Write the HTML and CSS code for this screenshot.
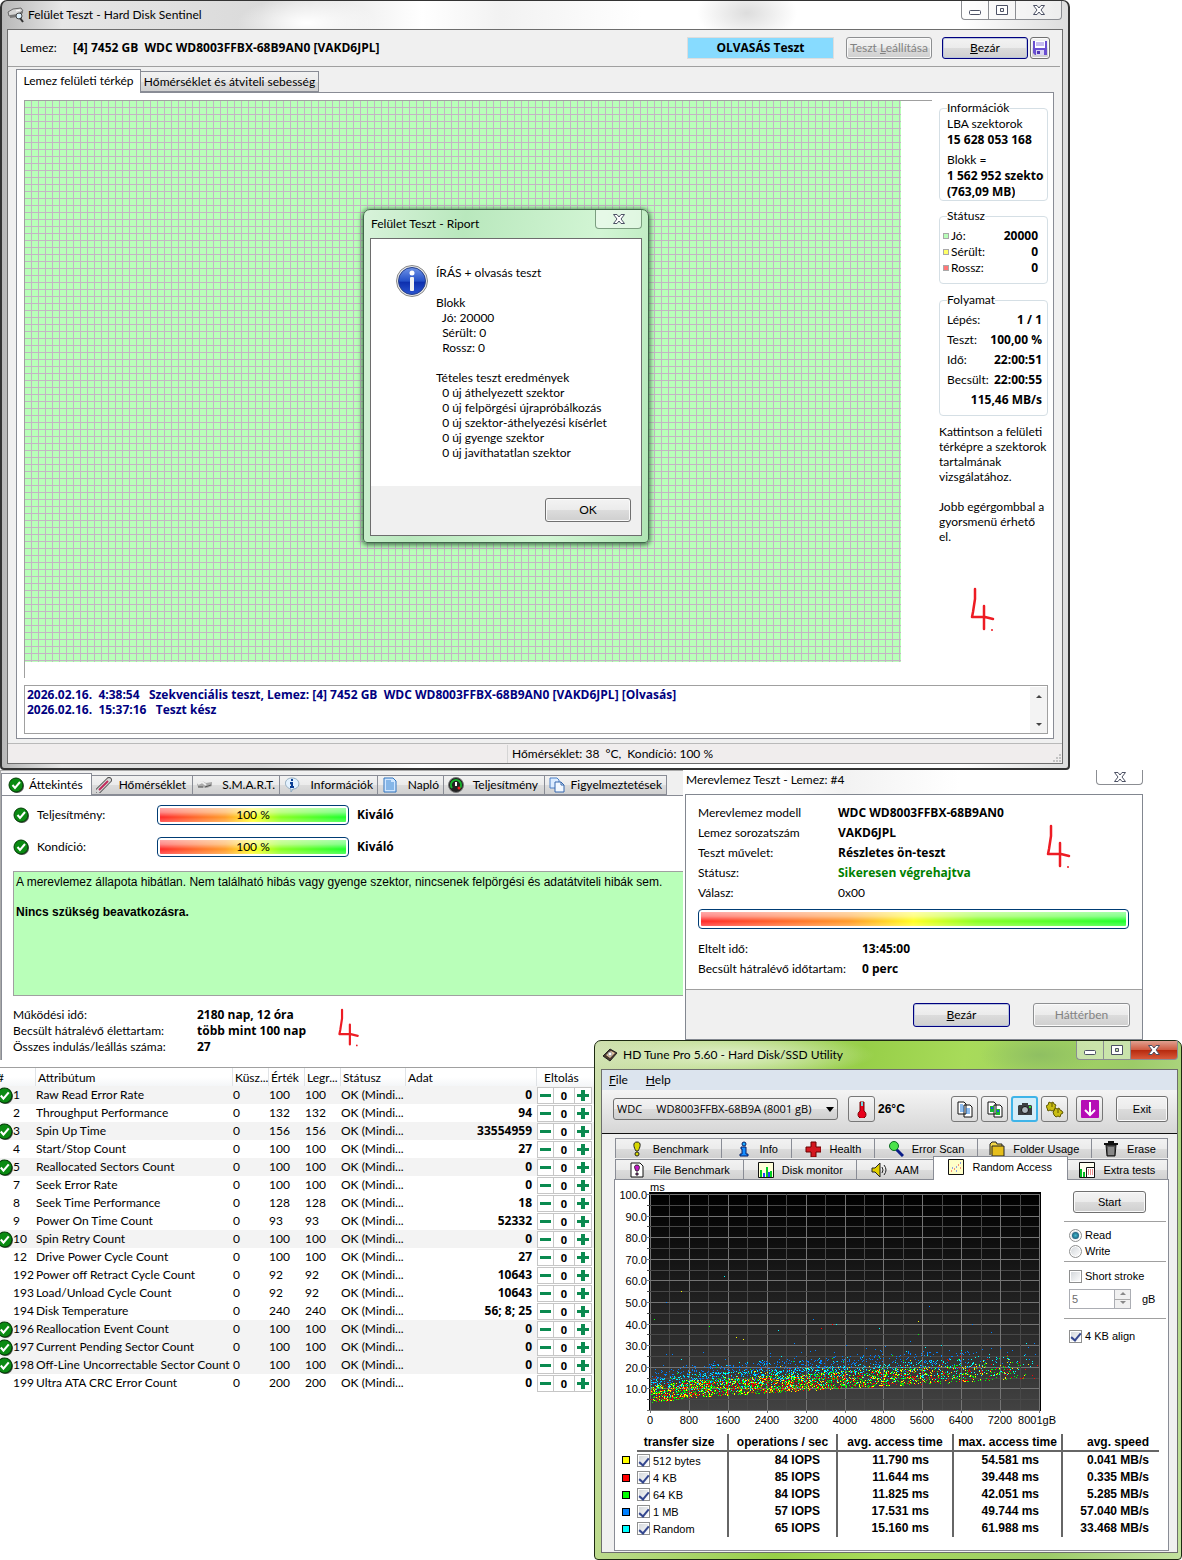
FILE: index.html
```html
<!DOCTYPE html>
<html lang="hu">
<head>
<meta charset="utf-8">
<meta name="viewport" content="width=device-width, initial-scale=1">
<title>Felület Teszt - Hard Disk Sentinel</title>
<link rel="stylesheet" href="styles.css">
</head>
<body>
<svg class="defs" aria-hidden="true">
  <symbol id="ok" viewBox="0 0 16 16"><circle cx="9" cy="9" r="7" fill="#555"/><circle cx="8" cy="8" r="7" fill="#0a8a12" stroke="#033d06"/><path d="M4.500 8l2.500 3 5-6" fill="none" stroke="#fff" stroke-width="2"/></symbol>
  <symbol id="min" viewBox="0 0 14 12"><rect x="1.500" y="6.500" width="11" height="4" rx="1" fill="#fff" stroke="#4c5164"/></symbol>
  <symbol id="max" viewBox="0 0 14 12"><path d="M1.500 1.500h11v9h-11zM5.500 4.500h3v3h-3z" fill="#fff" fill-rule="evenodd" stroke="#4c5164"/></symbol>
  <symbol id="close" viewBox="0 0 14 12"><path d="M1.500 1.500h3.500l2 2.500 2-2.500h3.500L9 6l3.500 4.500H9L7 8l-2 2.500H1.500L5 6z" fill="#fff" stroke="#4c5164"/></symbol>
  <symbol id="four" viewBox="0 0 26 46"><path d="M5 2L5 12 3 25 2 30l13 0 8 2M14 19l0 11 0 12" fill="none" stroke="#ed1c24" stroke-width="2.500" stroke-linecap="round" stroke-linejoin="round"/><circle cx="22" cy="43" r="1" fill="#ed1c24"/></symbol>
</svg>

<main class="desktop">
  <section class="window surface">
    <header class="titlebar">
      <svg class="app-icon" viewBox="0 0 18 16"><path d="M1 5l5-3 8-1 2 3-5 4-9 1z" fill="#d5d5d5" stroke="#666"/><path d="M3 8l8-1 5-4v3l-5 4-8 1z" fill="#777"/><path d="M9 4l4-1" stroke="#fff"/><circle cx="12" cy="9" r="3" fill="#dff3ff" stroke="#444"/><path d="M13 11l3 4" stroke="#333" stroke-width="2"/></svg>
      <h1>Felület Teszt - Hard Disk Sentinel</h1>
      <div class="controls">
        <button aria-label="Kis méret"><svg><use href="#min"/></svg></button><button aria-label="Teljes méret"><svg><use href="#max"/></svg></button><button class="wide" aria-label="Bezárás"><svg><use href="#close"/></svg></button>
      </div>
    </header>
    <div class="client">
      <div class="diskbar">
        <span class="caption">Lemez:</span><strong>[4] 7452 GB&nbsp; WDC WD8003FFBX-68B9AN0 [VAKD6JPL]</strong>
        <span class="mode">OLVASÁS Teszt</span>
        <button class="btn" disabled>Teszt <u>L</u>eállítása</button>
        <button class="btn primary"><u>B</u>ezár</button>
        <button class="btn save" aria-label="Mentés"><svg viewBox="0 0 16 16"><path d="M1 1h14v14H3l-2-2z" fill="#6a4fd0"/><path d="M3 1h10v7H3z" fill="#fff"/><path d="M4 3h8M4 5h8" stroke="#8d79df"/><path d="M4 10h8v5H4z" fill="#d9d4f2"/><path d="M5 11h3v3H5z" fill="#5138b5"/></svg></button>
      </div>
      <div class="tabs surface-tabs" role="tablist">
        <button class="tab active" role="tab">Lemez felületi térkép</button><button class="tab" role="tab">Hőmérséklet és átviteli sebesség</button>
      </div>
      <div class="panel">
        <div class="map"><div class="cells"></div></div>
        <aside class="side">
          <fieldset class="info"><legend>Információk</legend>
            <p>LBA szektorok</p><p><b>15 628 053 168</b></p>
            <p class="gap">Blokk =</p><p><b>1 562 952 szektor</b></p><p><b>(763,09 MB)</b></p>
          </fieldset>
          <fieldset class="status"><legend>Státusz</legend>
            <p><i class="good"></i>Jó:<b>20000</b></p><p><i class="weak"></i>Sérült:<b>0</b></p><p><i class="bad"></i>Rossz:<b>0</b></p>
          </fieldset>
          <fieldset class="progress"><legend>Folyamat</legend>
            <p>Lépés:<b>1 / 1</b></p><p>Teszt:<b>100,00 %</b></p><p>Idő:<b>22:00:51</b></p><p>Becsült:<b>22:00:55</b></p><p><b>115,46 MB/s</b></p>
          </fieldset>
          <div class="hint"><p>Kattintson a felületi térképre a szektorok tartalmának vizsgálatához.</p><p>Jobb egérgombbal a gyorsmenü érhető el.</p></div>
          <svg class="ink ink-side" role="img" aria-label="4."><use href="#four"/></svg>
        </aside>
        <div class="log">
          <div><p>2026.02.16.&nbsp; 4:38:54&nbsp;&nbsp; Szekvenciális teszt, Lemez: [4] 7452 GB&nbsp; WDC WD8003FFBX-68B9AN0 [VAKD6JPL] [Olvasás]</p><p>2026.02.16.&nbsp; 15:37:16&nbsp;&nbsp; Teszt kész</p></div>
          <div class="scroll"><button aria-label="Fel" class="up"></button><button aria-label="Le" class="down"></button></div>
        </div>
      </div>
      <footer class="statusbar"><span>Hőmérséklet: 38 &nbsp;°C,&nbsp; Kondíció: 100 %</span><svg class="grip" viewBox="0 0 10 10"><path d="M7 1h2v2H7zM4 4h2v2H4zM7 4h2v2H7zM1 7h2v2H1zM4 7h2v2H4zM7 7h2v2H7z" fill="#c3c3c3"/></svg></footer>
    </div>

    <section class="window report" role="dialog" aria-label="Felület Teszt - Riport">
      <header class="titlebar"><h2>Felület Teszt - Riport</h2><div class="controls"><button class="wide" aria-label="Bezárás"><svg><use href="#close"/></svg></button></div></header>
      <div class="client">
        <div class="message">
          <svg class="info-icon" viewBox="0 0 32 32"><defs><linearGradient id="ball" x2="0" y2="1"><stop offset="0" stop-color="#6f93e6"/><stop offset=".5" stop-color="#2450c8"/><stop offset=".55" stop-color="#0d2fae"/><stop offset="1" stop-color="#2a55d0"/></linearGradient></defs><circle cx="16" cy="16" r="15.500" fill="#e8e8e8" stroke="#888"/><circle cx="16" cy="16" r="13.500" fill="url(#ball)" stroke="#27408b"/><circle cx="16" cy="8" r="2.500" fill="#fff"/><rect x="14" y="12" width="4" height="14" rx="1" fill="#f2f2f2"/></svg>
          <pre>ÍRÁS + olvasás teszt

Blokk
  Jó: 20000
  Sérült: 0
  Rossz: 0

Tételes teszt eredmények
  0 új áthelyezett szektor
  0 új felpörgési újrapróbálkozás
  0 új szektor-áthelyezési kísérlet
  0 új gyenge szektor
  0 új javíthatatlan szektor</pre>
        </div>
        <div class="actions"><button class="btn">OK</button></div>
      </div>
    </section>
  </section>

  <div class="lower">
    <section class="overview">
      <div class="tabs" role="tablist">
        <button class="tab active" role="tab"><svg viewBox="0 0 16 16"><use href="#ok"/></svg>Áttekintés</button>
        <button class="tab t-temp" role="tab"><svg viewBox="0 0 16 16"><path d="M2 14L13 3" stroke="#555" stroke-width="6" stroke-linecap="round"/><path d="M2 14L13 3" stroke="#d9d9d9" stroke-width="4" stroke-linecap="round"/><path d="M3 13l9-9" stroke="#c22a5c" stroke-width="2"/></svg>Hőmérséklet</button>
        <button class="tab t-smart" role="tab"><svg viewBox="0 0 16 16"><path d="M0 7l5-3 4 2 6-1v4l-5 2-9-1z" fill="#aaa"/><path d="M1 7l4-2 4 3" fill="none" stroke="#eee" stroke-width="2"/><path d="M8 10l6-2M1 10h5" stroke="#555"/></svg>S.M.A.R.T.</button>
        <button class="tab t-info" role="tab"><svg viewBox="0 0 16 16"><path d="M8 1c9 0 9 11 1 11l-2 3v-3C-1 10 0 1 8 1z" fill="#e3f2ff" stroke="#8fa9bd"/><path d="M8 2v2M6 6h2v4M6 10h4" stroke="#0a3f96" stroke-width="2"/></svg>Információk</button>
        <button class="tab t-log" role="tab"><svg viewBox="0 0 16 16"><path d="M2 1h9l3 3v11H2z" fill="#cfe6ff" stroke="#2f73bd"/><path d="M4 4h5M4 6h8M4 8h8M4 10h8M4 12h8" stroke="#3d86cf"/></svg>Napló</button>
        <button class="tab t-perf" role="tab"><svg viewBox="0 0 16 16"><circle cx="8" cy="8" r="7.500" fill="#222" stroke="#777"/><path d="M4 11a5 5 0 1 1 8 0" fill="none" stroke="#16b32b" stroke-width="2"/><path d="M8 9V5" stroke="#fff" stroke-width="2"/><circle cx="11" cy="11" r="1.500" fill="#e22"/></svg>Teljesítmény</button>
        <button class="tab t-alert" role="tab"><svg viewBox="0 0 16 16"><path d="M1 1h7l2 2v8H1z" fill="#dcecff" stroke="#4a7fc6"/><path d="M6 5h6l3 3v7H6z" fill="#f2f8ff" stroke="#3567ad"/><path d="M12 5v3h3" fill="none" stroke="#3567ad"/></svg>Figyelmeztetések</button>
      </div>
      <div class="overview-body">
        <div class="meter"><svg viewBox="0 0 16 16"><use href="#ok"/></svg><span>Teljesítmény:</span><div class="bar" role="progressbar" aria-valuenow="100">100 %</div><b>Kiváló</b></div>
        <div class="meter"><svg viewBox="0 0 16 16"><use href="#ok"/></svg><span>Kondíció:</span><div class="bar" role="progressbar" aria-valuenow="100">100 %</div><b>Kiváló</b></div>
        <div class="verdict"><p>A merevlemez állapota hibátlan. Nem található hibás vagy gyenge szektor, nincsenek felpörgési és adatátviteli hibák sem.</p><p><b>Nincs szükség beavatkozásra.</b></p></div>
        <dl class="stats"><dt>Működési idő:</dt><dd>2180 nap, 12 óra</dd><dt>Becsült hátralévő élettartam:</dt><dd>több mint 100 nap</dd><dt>Összes indulás/leállás száma:</dt><dd>27</dd></dl>
        <svg class="ink ink-overview" role="img" aria-label="4."><use href="#four"/></svg>
      </div>
    </section>

    <section class="selftest">
      <header class="titlebar"><h2>Merevlemez Teszt - Lemez: #4</h2><div class="controls"><button class="wide" aria-label="Bezárás"><svg><use href="#close"/></svg></button></div></header>
      <div class="selftest-client">
        <div class="selftest-body">
          <dl><dt>Merevlemez modell</dt><dd>WDC WD8003FFBX-68B9AN0</dd><dt>Lemez sorozatszám</dt><dd>VAKD6JPL</dd><dt>Teszt művelet:</dt><dd>Részletes ön-teszt</dd><dt>Státusz:</dt><dd class="success">Sikeresen végrehajtva</dd><dt>Válasz:</dt><dd class="plain">0x00</dd></dl>
          <div class="bar" role="progressbar" aria-valuenow="100"></div>
          <dl class="times"><dt>Eltelt idő:</dt><dd>13:45:00</dd><dt>Becsült hátralévő időtartam:</dt><dd>0 perc</dd></dl>
          <svg class="ink ink-test" role="img" aria-label="4."><use href="#four"/></svg>
        </div>
        <div class="actions"><button class="btn primary"><u>B</u>ezár</button><button class="btn" disabled>Háttérben</button></div>
      </div>
    </section>

    <table class="smart">
      <colgroup><col class="c-id"><col class="c-name"><col class="c-num"><col class="c-num"><col class="c-num"><col class="c-stat"><col class="c-data"><col class="c-off"></colgroup>
      <thead><tr><th>#</th><th>Attribútum</th><th>Küsz...</th><th>Érték</th><th>Legr...</th><th>Státusz</th><th>Adat</th><th>Eltolás</th></tr></thead>
      <tbody id="smart-rows"></tbody>
    </table>

    <section class="window tune">
      <header class="titlebar"><svg class="app-icon" viewBox="0 0 16 16"><path d="M1 9l7-7 7 4-7 8z" fill="#4a3a30" stroke="#222"/><path d="M4 8l5-4 4 2-5 5z" fill="#e9c9a0"/><circle cx="8" cy="7" r="2" fill="#fff" stroke="#999"/></svg><h2>HD Tune Pro 5.60 - Hard Disk/SSD Utility</h2>
        <div class="controls"><button aria-label="Minimize"><svg><use href="#min"/></svg></button><button aria-label="Maximize"><svg><use href="#max"/></svg></button><button class="wide red" aria-label="Close"><svg><use href="#close"/></svg></button></div></header>
      <div class="client">
        <nav class="menu"><a href="#file"><u>F</u>ile</a><a href="#help"><u>H</u>elp</a></nav>
        <div class="toolbar">
          <div class="drive"><select aria-label="Drive"><option>WDC &nbsp; &nbsp; WD8003FFBX-68B9A (8001 gB)</option></select></div>
          <button class="tool" aria-label="Temperature"><svg viewBox="0 0 18 18"><path d="M7 2h4v9a4 4 0 1 1-4 0z" fill="#e8001c" stroke="#700"/><path d="M8 2h2v4H8z" fill="#6fd8e0"/></svg></button>
          <strong>26°C</strong>
          <div class="tool-group">
            <button class="tool" aria-label="Copy text"><svg viewBox="0 0 18 18"><path d="M2 2h6l2 2v10H2zM8 5h6l2 2v10H8z" fill="#fff" stroke="#111"/><path d="M4 5h3M4 7h4M4 9h4M4 11h4M10 9h4M10 11h4M10 13h4" stroke="#1d7ae0"/></svg></button>
            <button class="tool" aria-label="Copy image"><svg viewBox="0 0 18 18"><path d="M2 2h6l2 2v10H2zM8 5h6l2 2v10H8z" fill="#fff" stroke="#111"/><path d="M4 6h4v6H4zM10 9h4v6h-4z" fill="#18b530"/><path d="M5 7h2v2H5zM11 10h2v2h-2z" fill="#2050e0"/></svg></button>
            <button class="tool hot" aria-label="Screenshot"><svg viewBox="0 0 18 18"><path d="M6 5V3h6v2h3l1 1v9H2V6l1-1z" fill="#3b3f42"/><circle cx="9" cy="10" r="3.500" fill="#aeb8be" stroke="#111"/><path d="M13 6h2v2h-2z" fill="#3d3"/></svg></button>
            <button class="tool" aria-label="Settings"><svg viewBox="0 0 18 18"><g fill="#c9bd12" stroke="#5e5700"><path d="M3 2l2 1 2-1 1 2 2 1-1 2 1 2-2 1-2 1-2-1-2 1-1-3-1-2 2-1z"/><path d="M9 8l2 1 2-1 1 2 2 1 1 2-2 1-1 3-2-1-2 1-2-2-1-3 1-1z"/></g><path d="M6 3v4M12 9v4" stroke="#5e5700"/></svg></button>
          </div>
          <button class="tool" aria-label="Save"><svg viewBox="0 0 18 18"><rect width="18" height="18" rx="1" fill="#b60cb6"/><path d="M9 2v12M4 10l5 5 5-5" fill="none" stroke="#fff" stroke-width="2"/></svg></button>
          <button class="btn exit">Exit</button>
        </div>
        <div class="tune-body">
          <div class="tune-tabs first" role="tablist">
            <button class="tab" role="tab"><svg viewBox="0 0 16 16"><path d="M8 1c5 0 3 6 1 9H7C5 7 3 1 8 1z" fill="#d8d800" stroke="#222"/><circle cx="8" cy="13" r="2" fill="#d8d800" stroke="#222"/></svg>Benchmark</button>
            <button class="tab" role="tab"><svg viewBox="0 0 16 16"><circle cx="8" cy="3" r="2" fill="#19a8ff" stroke="#001a66"/><path d="M5 6h5v7h2v2H4v-2h2V8H5z" fill="#168cff" stroke="#001a66"/></svg>Info</button>
            <button class="tab" role="tab"><svg viewBox="0 0 16 16"><path d="M6 1h5v5h5v5h-5v5H6v-5H1V6h5z" fill="#d31820" stroke="#6b0000"/></svg>Health</button>
            <button class="tab" role="tab"><svg viewBox="0 0 16 16"><path d="M8 8l7 7" stroke="#0a1c88" stroke-width="3"/><circle cx="6" cy="5" r="4.500" fill="#4ae34a" stroke="#0a6a20"/></svg>Error Scan</button>
            <button class="tab" role="tab"><svg viewBox="0 0 16 16"><path d="M1 14V3l2-2h4l1 2h5v3" fill="#f2d64a" stroke="#222"/><path d="M3 5h12v10H3z" fill="#e6bf1c" stroke="#222"/></svg>Folder Usage</button>
            <button class="tab" role="tab"><svg viewBox="0 0 16 16"><path d="M6 2V1h4v1M1 3h14" fill="none" stroke="#111" stroke-width="2"/><path d="M3 4h10l-1 11H4z" fill="#555" stroke="#111"/><path d="M6 6v8M8 6v8M10 6v8" stroke="#bbb"/></svg>Erase</button>
          </div>
          <div class="tune-tabs second" role="tablist">
            <button class="tab" role="tab"><svg viewBox="0 0 16 16"><path d="M2 1h9l3 3v11H2z" fill="#fff" stroke="#111"/><path d="M8 3c4 0 2 5 1 6H7C6 7 4 3 8 3zM7 11h2v2H7z" fill="#c416c4" stroke="#222"/></svg>File Benchmark</button>
            <button class="tab" role="tab"><svg viewBox="0 0 16 16"><path d="M.5.500h15v15H.500z" fill="#ffffd8" stroke="#111"/><path d="M2 15V8h2v7M8 15V5h2v10M12 15V9h2v6" fill="#0c2"/><path d="M5 15v-4h2v4M10 15v-5h2v5" fill="#24f"/></svg>Disk monitor</button>
            <button class="tab" role="tab"><svg viewBox="0 0 16 16"><path d="M1 6h3l5-5v14l-5-5H1z" fill="#e2cf00" stroke="#222"/><path d="M11 5q2 3 0 6M13 3q4 5 0 10" fill="none" stroke="#222"/></svg>AAM</button>
            <button class="tab active" role="tab"><svg viewBox="0 0 16 16"><path d="M.5.500h15v15H.500z" fill="#ffffc8" stroke="#111"/><path d="M3 12h1M6 10h1M10 6h1M12 9h1" stroke="#e22"/><path d="M4 9h1M8 8h1M12 4h1M8 12h1" stroke="#24f"/></svg>Random Access</button>
            <button class="tab" role="tab"><svg viewBox="0 0 16 16"><path d="M.5.500h15v15H.500z" fill="#fffff0" stroke="#111"/><path d="M1 15V7h2v8M4 15v-5h2v5" fill="#0b2"/><path d="M7.500 5.500h8v10h-8z" fill="#fff" stroke="#111"/><path d="M9 8h5M9 10h5M9 12h5" stroke="#d22" stroke-dasharray="1 1"/></svg>Extra tests</button>
          </div>
          <div class="tune-panel">
            <div class="plot-row">
              <svg class="chart" id="chart" viewBox="0 0 446 248"></svg>
              <form class="options">
                <div><button type="button" class="btn">Start</button></div>
                <div><label><input type="radio" name="rw" checked>Read</label><label><input type="radio" name="rw">Write</label></div>
                <div><label><input type="checkbox">Short stroke</label><span class="spin"><input type="text" value="5" aria-label="Short stroke size" disabled><i class="spin-buttons"></i><span>gB</span></span></div>
                <div><label><input type="checkbox" checked>4 KB align</label></div>
              </form>
            </div>
            <table class="results">
              <thead><tr><td></td><th>transfer size</th><th>operations / sec</th><th>avg. access time</th><th>max. access time</th><th>avg. speed</th></tr></thead>
              <tbody>
                <tr><td><i class="swatch yellow"></i></td><td><label><input type="checkbox" checked>512 bytes</label></td><td>84 IOPS</td><td>11.790 ms</td><td>54.581 ms</td><td>0.041 MB/s</td></tr>
                <tr><td><i class="swatch red"></i></td><td><label><input type="checkbox" checked>4 KB</label></td><td>85 IOPS</td><td>11.644 ms</td><td>39.448 ms</td><td>0.335 MB/s</td></tr>
                <tr><td><i class="swatch green"></i></td><td><label><input type="checkbox" checked>64 KB</label></td><td>84 IOPS</td><td>11.825 ms</td><td>42.051 ms</td><td>5.285 MB/s</td></tr>
                <tr><td><i class="swatch blue"></i></td><td><label><input type="checkbox" checked>1 MB</label></td><td>57 IOPS</td><td>17.531 ms</td><td>49.744 ms</td><td>57.040 MB/s</td></tr>
                <tr><td><i class="swatch cyan"></i></td><td><label><input type="checkbox" checked>Random</label></td><td>65 IOPS</td><td>15.160 ms</td><td>61.988 ms</td><td>33.468 MB/s</td></tr>
              </tbody>
            </table>
          </div>
        </div>
      </div>
    </section>
  </div>
</main>
<script src="script.js"></script>
</body>
</html>
```

FILE: styles.css
```css
* { box-sizing: border-box; }
:root { --ui: Lato, "Noto Sans", sans-serif; --ui-bold: "Open Sans", "Noto Sans", sans-serif; --arial: "Liberation Sans", Arial, sans-serif; }
body { margin: 0; background: #fff; color: #000; font: 12px/16px var(--ui); }
h1, h2, p, dl, dd, pre { margin: 0; font: inherit; }
b, strong, dd { font-weight: bold; font-family: var(--ui-bold); }
button, input, select { font: inherit; color: inherit; margin: 0; padding: 0; }
svg { display: block; flex: none; }
.defs { position: absolute; width: 0; height: 0; }

/* window frames */
.window { border: 1px solid #222; border-radius: 7px 7px 4px 4px; padding: 0 6px 6px; display: flex; flex-direction: column; }
.titlebar { display: flex; align-items: center; height: 28px; gap: 4px; position: relative; }
.titlebar .controls { margin-left: auto; align-self: flex-start; display: flex; }
.controls button { width: 27px; height: 19px; border: 1px solid #8b8d92; border-top: 0; border-right: 0; background: rgba(255,255,255,.45); display: grid; place-items: center; }
.controls button:first-child { border-radius: 0 0 0 4px; }
.controls button:last-child { border-radius: 0 0 4px 0; border-right: 1px solid #8b8d92; }
.controls button:only-child { border-radius: 0 0 4px 4px; }
.controls .wide { width: 47px; }
.controls svg { width: 14px; height: 12px; }
.window > .client { border: 1px solid #6d6d6d; background: #f0f0f0; display: flex; flex-direction: column; }

.btn { height: 22px; border: 1px solid #707070; border-radius: 3px; background: linear-gradient(#f3f3f3, #ebebeb 50%, #dcdcdc 50%, #cfcfcf); box-shadow: inset 0 0 0 1px #fafafa; }
.btn:disabled { color: #838383; border-color: #8d8f91; }
.btn.primary { border: 1px solid #000080; box-shadow: inset 0 0 0 1px #b9c4dd; }

/* surface test window */
.desktop { position: relative; }
.surface { margin-right: 112px; height: 770px; position: relative; border: 2px solid #333; border-top-width: 1px; background: radial-gradient(ellipse 70px 26px at 305px 22px, #fff, transparent), radial-gradient(ellipse 50px 30px at 745px 12px, #ddd, transparent), linear-gradient(90deg, #b8b8b8, #e6e6e6 60px, #dadada 260px, #fff 420px, #f2f2f2 500px, #fff 640px, #fff 960px, #ddd); padding: 0 3px 4px 5px; }
.surface > .titlebar { gap: 3px; }
.surface > .titlebar .controls { margin-right: 3px; }
.app-icon { width: 18px; height: 16px; }
.surface > .client { flex: 1; margin-right: 2px; }
.diskbar { height: 37px; display: flex; align-items: center; padding: 0 10px 0 12px; margin: 0 2px 0 0; border-bottom: 1px solid #a0a0a0; }
.diskbar .caption { width: 53px; }
.diskbar .mode { width: 147px; height: 22px; margin: 0 12px 0 auto; border: 1px solid #ddd; background: #87dbff; font: bold 12px/20px var(--ui-bold); text-align: center; }
.diskbar .btn { width: 86px; white-space: nowrap; }
.diskbar .primary { margin-left: 10px; }
.diskbar .btn.save { width: 20px; margin-left: 2px; display: grid; place-items: center; }
.save svg { width: 16px; height: 16px; }
.tabs { display: flex; align-items: flex-end; }
.tab { border: 1px solid #898c95; background: linear-gradient(#f2f2f2, #ebebeb 50%, #dcdcdc 50%, #d0d0d0); white-space: nowrap; }
.tab.active { background: #fff; border-bottom: 0; }
.surface-tabs { height: 25px; padding-left: 8px; }
.surface-tabs .tab { width: 179px; height: 21px; margin-left: -1px; }
.surface-tabs .tab.active { width: 125px; height: 24px; margin: 0 0 -1px; z-index: 1; padding-bottom: 2px; }
.panel { flex: 1; margin: 0 8px 4px; border: 1px solid #898c95; background: #fff; padding: 7px 5px 4px 7px; display: grid; grid-template: minmax(0, 1fr) 49px / minmax(0, 1fr) 109px; gap: 7px; }
.map { border: solid #a0a0a0; border-width: 1px 0 0 1px; }
.cells { max-width: 876px; height: 561px; background: repeating-linear-gradient(90deg, transparent 0 6px, #c4b4c4 6px 7px), repeating-linear-gradient(transparent 0 6px, #c4b4c4 6px 7px), #b9ffb9; }
.side fieldset { margin: 0; border: 1px solid #d5dfe5; border-radius: 4px; padding: 0 8px; min-width: 0; }
.side legend { padding: 0; margin-left: -1px; }
.side { min-width: 0; position: relative; }
.side fieldset p { display: flex; white-space: nowrap; align-items: center; }
.side p b { margin-left: auto; }
.side .info { padding: 0 3px 0 7px; }
.side .info legend { margin-left: 0; }
.info p b { margin: 0; overflow: hidden; }
.info .gap { margin-top: 4px; }
.side .status { margin-top: 7px; padding: 4px 9px 7px 3px; }
.status i { width: 6px; height: 6px; border: 1px solid #a9a9a9; margin-right: 2px; background: #b9ffb9; }
.status i.weak { background: #ff6; }
.status i.bad { background: #f77; }
.side .status legend { margin-left: 4px; }
.side .progress { margin-top: 8px; padding: 2px 5px 5px 7px; line-height: 20px; }
.side .progress legend { line-height: 16px; margin-left: 0; }
.hint { margin-top: 8px; line-height: 15px; }
.hint p + p { margin-top: 15px; }
.ink { position: absolute; width: 26px; height: 46px; }
.ink-side { left: 31px; top: 487px; }
.log { grid-column: 1 / 3; border: 1px solid #a0a0a0; display: flex; justify-content: space-between; padding: 1px 0 0 2px; color: #000080; font: bold 12px/15px var(--ui-bold); }
.scroll { width: 17px; background: #f3f3f3; display: flex; flex-direction: column; justify-content: space-between; }
.scroll button { border: 0; background: none; height: 18px; display: grid; place-items: center; }
.scroll button::after { content: ""; border: 3px solid transparent; border-bottom-color: #444; margin-top: -3px; }
.scroll .down::after { border-color: #444 transparent transparent; margin: 3px 0 0; }
.statusbar { height: 20px; background: #f0eded; border-top: 1px solid #b9b9b9; display: flex; align-items: center; justify-content: space-between; }
.statusbar span { margin-left: 499px; padding-left: 4px; border-left: 1px solid #d5d5d5; line-height: 18px; }
.grip { width: 10px; height: 10px; align-self: flex-end; }

/* report dialog */
.report { position: absolute; left: 361px; top: 208px; width: 286px; height: 334px; border-color: #41684a; background: linear-gradient(100deg, #d8f2da, #b9e8bd 30%, #d2f5d4 70%, #b0e5b4); box-shadow: 0 1px 5px 1px #41684a; }
.report .client { flex: 1; }
.report .titlebar { padding-left: 1px; }
.report .controls button { border-color: #7c9e80; }
.message { flex: 1; background: #fff; display: flex; gap: 8px; padding: 26px 0 0 25px; }
.info-icon { width: 32px; height: 32px; }
.message pre { line-height: 15px; }
.report .client .actions { height: 49px; padding: 12px 10px; text-align: right; }
.report .btn { width: 86px; height: 24px; }

/* lower half: tool windows tiled beside each other */
.lower { display: grid; grid-template: 270px 27px auto / minmax(0, 594fr) minmax(0, 90fr) minmax(0, 498fr); }
.overview { grid-area: 1 / 1 / 3 / 3; height: 290px; background: #f0f0f0; padding-top: 2px; margin-right: 1px; border-left: 1px solid #aaa; border-top: 1px solid #aaa; }
.overview .tabs { height: 22px; }
.overview .tab { height: 20px; display: flex; align-items: center; gap: 5px; padding: 0 4px; margin-right: -1px; flex: none; }
.overview .tab.active { height: 23px; margin-bottom: -1px; width: 91px; position: relative; padding-left: 6px; }
.overview .t-temp, .overview .t-perf { width: 102px; padding-right: 6px; }
.t-smart { width: 88px; }
.t-info { width: 99px; }
.t-log { width: 67px; }
.t-alert { width: 123px; }
.overview .tab:not(.active) { justify-content: space-between; }
.overview svg { width: 16px; height: 16px; }
.overview-body { position: relative; background: #fff; height: 265px; border: 1px solid #898c95; border-width: 1px 0 0 1px; padding: 8px 0 0 11px; }
.meter { display: grid; grid-template-columns: 24px 120px 192px auto; height: 22px; align-items: center; margin-bottom: 10px; }
.meter b { margin-left: 8px; }
.bar { height: 20px; border: 1px solid #003c74; border-radius: 4px; padding: 2px; text-align: center; line-height: 14px; background: linear-gradient(rgba(255,255,255,.6), rgba(255,255,255,.45) 30%, transparent 65%, rgba(255,255,255,.25)) content-box, linear-gradient(90deg, #ff2a2a, #ff9c2a 35%, #ff2 50%, #8f2 65%, #1eff2e) content-box, #fff; }
.verdict { border: 1px solid #a0a0a0; border-right: 0; background: #b9ffb9; height: 125px; margin-top: 13px; padding: 3px 2px; font: 12px/15px var(--arial); white-space: nowrap; overflow: hidden; }
.verdict b { font-family: var(--arial); }
.verdict p + p { margin-top: 15px; }
.stats { display: grid; grid-template-columns: 184px auto; margin-top: 11px; }
.overview .ink { width: 26px; height: 40px; }
.ink-overview { left: 334px; bottom: 12px; }

.selftest { grid-area: 1 / 3 / 2 / 4; margin-right: 39px; display: flex; flex-direction: column; background: linear-gradient(90deg, #fff 20%, #f2f2f2 35%, #fff 60%); }
.selftest .titlebar { height: 24px; padding-left: 2px; padding-bottom: 4px; }
.selftest .controls button { height: 15px; }
.selftest-client { flex: 1; margin-left: 1px; border: 1px solid #828790; display: flex; flex-direction: column; }
.selftest-body { flex: 1; position: relative; background: #fff; padding: 8px 12px; line-height: 20px; }
.selftest dl { display: grid; grid-template-columns: 140px auto; }
.selftest .bar { margin: 6px 1px 10px 0; }
.selftest .times { grid-template-columns: 164px auto; }
.success { color: #008000; }
.plain { font: 12px/20px var(--ui); }
.ink-test { left: 360px; top: 29px; }
.selftest .actions { height: 50px; border-top: 1px solid #a0a0a0; background: #f0f0f0; padding: 13px 12px; display: flex; justify-content: flex-end; gap: 23px; }
.selftest .btn { width: 97px; height: 24px; }

/* SMART attributes */
.smart { grid-area: 3 / 1; align-self: start; width: 100%; table-layout: fixed; border-collapse: separate; border-spacing: 0; border-top: 1px solid #a0a0a0; }
.smart .c-id, .smart .c-num { width: 36px; }
.smart .c-stat { width: 65px; }
.smart .c-data { width: 131px; }
.smart .c-off { width: 57px; }
.smart th { font-weight: normal; text-align: left; height: 18px; padding: 2px 0 0 2px; line-height: 16px; border-right: 1px solid #e0e3e6; background: linear-gradient(#fff 50%, #f4f6f8); white-space: nowrap; }
.smart th:first-child { padding-left: 0; text-indent: -3px; }
.smart th:last-child { padding-left: 7px; border: 0; }
.smart td { padding: 0; height: 18px; line-height: 18px; white-space: nowrap; }
.smart td:first-child { padding-left: 13px; position: relative; }
.smart td svg { position: absolute; left: -4px; top: 1px; width: 17px; height: 17px; }
.smart td.data { font: bold 12px/18px var(--ui-bold); text-align: right; padding-right: 5px; }
.smart .critical { background: #f3f3f3; }
.offset { display: grid; grid-template-columns: 16px 21px 17px; height: 17px; }
.offset > * { border: 1px solid #c6c6c6; margin-right: -1px; background: #fff; text-align: center; font: bold 11px/15px var(--ui-bold); padding: 0; position: relative; }
.offset button::before, .offset .plus::after { content: ""; position: absolute; inset: 6px 2px; background: #0b8a50; }
.offset .plus::after { inset: 2px 6px; }

/* HD Tune */
.tune { grid-area: 2 / 2 / 4 / 4; z-index: 1; height: 520px; border-color: #1d2a12; padding: 0 3px 6px 6px; background: radial-gradient(ellipse 150px 22px at 130px 14px, #e2f0cc, transparent), radial-gradient(ellipse 60px 24px at 445px 14px, #8fbf62, transparent), linear-gradient(100deg, #cfe0b0, #97cf48 40%, #a8db5a 55%, #9ccb68 80%, #c3e2a0); font: 11px/14px var(--arial); }
.tune .titlebar { font: 12px/16px var(--ui); padding-left: 1px; }
.tune .app-icon { width: 16px; margin-right: 1px; }
.tune .controls .red { background: linear-gradient(#e0a090, #cf5a40 50%, #b5280c 50%, #d8593a); width: 48px; }
.tune > .client { flex: 1; }
.menu { display: flex; gap: 18px; height: 20px; padding-left: 7px; background: #dce4ee; font: 12px/20px var(--ui); }
.menu a { color: #000; text-decoration: none; }
.toolbar { height: 44px; display: flex; align-items: center; padding: 0 9px 5px 11px; border-bottom: 1px solid #111; background: linear-gradient(#f4f4f4, #d6d6d6); }
.drive { width: 225px; height: 22px; margin-right: 10px; position: relative; }
.drive::after { content: ""; position: absolute; right: 4px; top: 9px; border: 4px solid transparent; border-top: 5px solid #000; pointer-events: none; }
.drive select { width: 100%; height: 22px; appearance: none; border: 1px solid #707070; border-radius: 3px; padding-left: 3px; font-family: var(--ui-bold); font-size: 11px; background: linear-gradient(#f3f3f3, #ebebeb 50%, #dcdcdc 50%, #cfcfcf); }
.tool { width: 27px; height: 26px; border: 1px solid #777; border-radius: 3px; background: linear-gradient(#f5f5f5, #dcdcdc); display: grid; place-items: center; }
.tool svg { width: 18px; height: 18px; }
.tool.hot { border: 2px solid #3fb4e8; background: #d5edf8; }
.toolbar strong { font: bold 12px/16px var(--arial); margin-left: 3px; }
.tool-group { margin-left: auto; display: flex; gap: 3px; margin-right: 8px; }
.btn.exit { width: 52px; height: 26px; margin-left: 13px; }
.tune-body { flex: 1; padding: 4px 8px 1px 12px; display: flex; flex-direction: column; }
.tune-tabs { display: grid; padding: 0 2px 0 1px; height: 20px; }
.tune-tabs.first { grid-template-columns: 106fr 70fr 83fr 102fr 114fr 76fr; }
.tune-tabs.second { grid-template-columns: 128fr 113fr 76fr 134fr 100fr; margin-top: 1px; }
.tune-tabs .tab { display: flex; justify-content: center; align-items: center; gap: 8px; margin-right: -1px; border-bottom: 0; min-width: 0; }
.tune-tabs .tab.active { margin-top: -3px; height: 24px; position: relative; padding-bottom: 3px; }
.tune-tabs svg { width: 16px; height: 16px; }
.tune-panel { flex: 1; background: #fff; border: 1px solid #898c95; }
.plot-row { display: flex; justify-content: space-between; }
.chart { width: 446px; height: 248px; font: 11px var(--arial); }
.options { width: 104px; padding-right: 2px; }
.options > div { border-bottom: 1px solid #a0a0a0; padding: 5px; }
.options > div:first-child { padding: 11px 9px 8px; height: 42px; }
.options > div:nth-child(2) { height: 40px; }
.options > div:nth-child(3) { height: 57px; padding-top: 6px; }
.options > div:last-child { border: 0; padding-top: 9px; }
.options .btn { width: 73px; height: 22px; }
label { display: flex; align-items: center; gap: 3px; height: 16px; white-space: nowrap; }
input[type=checkbox], input[type=radio] { appearance: none; width: 13px; height: 13px; border: 1px solid #8e8f8f; background: linear-gradient(135deg, #d0d4d8, #fff); box-shadow: inset 0 0 0 1px #fff; flex: none; display: grid; place-items: center; }
input[type=radio] { border-radius: 50%; }
input[type=radio]:checked::after { content: ""; width: 7px; height: 7px; border-radius: 50%; background: radial-gradient(#4bc, #0c3a60); }
input[type=checkbox]:checked::after { content: ""; width: 4px; height: 8px; border: solid #34478f; border-width: 0 2px 2px 0; transform: rotate(40deg); }
.spin { display: flex; align-items: center; margin-top: 5px; }
.spin input { width: 45px; height: 20px; border: 1px solid #abadb3; border-right: 0; background: #fff; color: #6d6d6d; padding-left: 2px; }
.spin-buttons { width: 17px; height: 20px; border: 1px solid #abadb3; margin-right: 11px; background: linear-gradient(#aaa, #aaa) center / 100% 1px no-repeat, #f0f0f0; display: grid; align-content: space-around; justify-content: center; }
.spin-buttons::before, .spin-buttons::after { content: ""; border: 3px solid transparent; border-bottom-color: #888; margin-top: -3px; }
.spin-buttons::after { border-color: #888 transparent transparent; margin: 3px 0 0; }
.results { border-collapse: collapse; margin: 6px 9px 0 7px; width: calc(100% - 16px); table-layout: fixed; font: bold 12px/17px var(--arial); }
.results tr > * { padding: 0; text-align: right; height: 17px; white-space: nowrap; }
.results thead th { border-bottom: 2px solid #666; text-align: center; height: 15px; line-height: 13px; }
.results thead th:nth-child(2) { padding-right: 6px; }
.results tr > :first-child { width: 15px; text-align: left; }
.results tr > :nth-child(2) { width: 91px; }
.results tr > :nth-child(3) { width: 109px; }
.results tr > :nth-child(4) { width: 116px; }
.results tr > :nth-child(5) { width: 109px; }
.results thead th:nth-child(6) { text-align: right; padding-right: 10px; }
.results tr > :nth-child(n+3) { border-left: 2px solid #666; }
.results tbody td:nth-child(3) { padding-right: 16px; }
.results tbody td:nth-child(4) { padding-right: 23px; }
.results tbody td:nth-child(5) { padding-right: 22px; }
.results tbody td:nth-child(6) { padding-right: 10px; }
.results label { font: 11px/16px var(--arial); }
.swatch { display: block; width: 8px; height: 8px; border: 1px solid #000; }
.swatch.yellow { background: #ff0; }
.swatch.red { background: #f00; }
.swatch.green { background: #0f0; }
.swatch.blue { background: #0080ff; }
.swatch.cyan { background: #0ff; }
```

FILE: script.js
```js
// SMART attribute rows: id, name, value, worst, raw data, critical flag
const attributes = [
  [1, "Raw Read Error Rate", 100, 100, "0", 1],
  [2, "Throughput Performance", 132, 132, "94", 0],
  [3, "Spin Up Time", 156, 156, "33554959", 1],
  [4, "Start/Stop Count", 100, 100, "27", 0],
  [5, "Reallocated Sectors Count", 100, 100, "0", 1],
  [7, "Seek Error Rate", 100, 100, "0", 0],
  [8, "Seek Time Performance", 128, 128, "18", 0],
  [9, "Power On Time Count", 93, 93, "52332", 0],
  [10, "Spin Retry Count", 100, 100, "0", 1],
  [12, "Drive Power Cycle Count", 100, 100, "27", 0],
  [192, "Power off Retract Cycle Count", 92, 92, "10643", 0],
  [193, "Load/Unload Cycle Count", 92, 92, "10643", 0],
  [194, "Disk Temperature", 240, 240, "56; 8; 25", 0],
  [196, "Reallocation Event Count", 100, 100, "0", 1],
  [197, "Current Pending Sector Count", 100, 100, "0", 1],
  [198, "Off-Line Uncorrectable Sector Count", 100, 100, "0", 1],
  [199, "Ultra ATA CRC Error Count", 200, 200, "0", 0]
];
document.getElementById("smart-rows").innerHTML = attributes.map(([id, name, value, worst, data, critical]) =>
  `<tr class="${critical ? "critical" : ""}"><td>${critical ? '<svg><use href="#ok"/></svg>' : ""}${id}</td><td>${name}</td><td>0</td><td>${value}</td><td>${worst}</td><td>OK (Mindi...</td><td class="data">${data}</td><td><div class="offset"><button aria-label="-"></button><span>0</span><button class="plus" aria-label="+"></button></div></td></tr>`
).join("");

// Access time scatter chart
const left = 35, top0 = 14, width = 389, height = 216;
const parts = [
  '<defs><linearGradient id="night" x2="0" y2="1"><stop stop-color="#000"/><stop offset="1" stop-color="#424242"/></linearGradient></defs>',
  `<rect x="${left - 1}" y="${top0 - 2}" width="${width + 3}" height="${height + 3}" fill="#000"/>`,
  `<rect x="${left}" y="${top0}" width="${width}" height="${height}" fill="url(#night)"/>`
];
for (let i = 0; i <= 20; i++) {
  const gx = left + Math.round(width * i / 20), gy = top0 + Math.round(height * i / 20);
  const tone = i % 2 ? "#484848" : "#747474";
  parts.push(`<rect x="${gx}" y="${top0}" width="1" height="${height + (i % 2 ? 1 : 3)}" fill="${tone}"/>`);
  parts.push(`<rect x="${left - 3}" y="${gy}" width="${width + 3}" height="1" fill="${tone}"/>`);
  if (i % 2 === 0 && i < 20) {
    parts.push(`<text x="${left - 3}" y="${gy + 5}" text-anchor="end">${(100 - i * 5).toFixed(1)}</text>`);
    parts.push(`<text x="${gx}" y="${height + 28}" text-anchor="middle">${i * 400}</text>`);
  }
}
parts.push(`<text x="${left}" y="11">ms</text><text x="441" y="${height + 28}" text-anchor="end">8001gB</text>`);

let seed = 4711;
const random = () => (seed = (seed * 16807) % 2147483647) / 2147483647;
const series = [
  ["#0080ff", 800, 6, 9], ["#00ffff", 900, 2, 9], ["#ffff00", 850, 0, 8],
  ["#00ff00", 950, 0, 8], ["#ff0000", 650, 0, 7]
];
const dot = (ms, t) => `M${left + 1 + Math.floor(t * (width - 2))} ${(top0 + Math.round(height - ms * height / 100)) + .5}h1`;
for (const [color, count, base, spread] of series) {
  let d = "";
  for (let n = 0; n < count;) {
    const t = random();
    if (random() > (t < 0.4 ? 1 : 1 - (t - 0.4) * 1.55)) continue;
    const floor = t < 0.1 ? 3 + t * 30 : 6 + (t - 0.1) * 10;
    const ms = floor + base + random() * spread + (random() > 0.93 ? random() * spread * 0.9 : 0);
    d += dot(ms, t);
    n++;
  }
  parts.push(`<path d="${d}" stroke="${color}" shape-rendering="crispEdges"/>`);
}
const outliers = [
  ["#0080ff", [[50, .04], [42, .42], [48, .72], [31, .37], [36, .88], [26, .04], [40, .83], [32, .67]]],
  ["#00ffff", [[62, .19], [37, .33], [40, .48], [38, .59], [31, .97], [30, .75]]],
  ["#ffff00", [[55, .08], [34, .22], [33, .24], [41, .69]]],
  ["#00ff00", [[42, .01], [39, .15], [35, .69]]], ["#ff0000", [[38, .44], [40, .47], [15, .99]]]
];
for (const [color, points] of outliers) parts.push(`<path d="${points.map(p => dot(...p)).join("")}" stroke="${color}" shape-rendering="crispEdges"/>`);
document.getElementById("chart").innerHTML = parts.join("");
```
